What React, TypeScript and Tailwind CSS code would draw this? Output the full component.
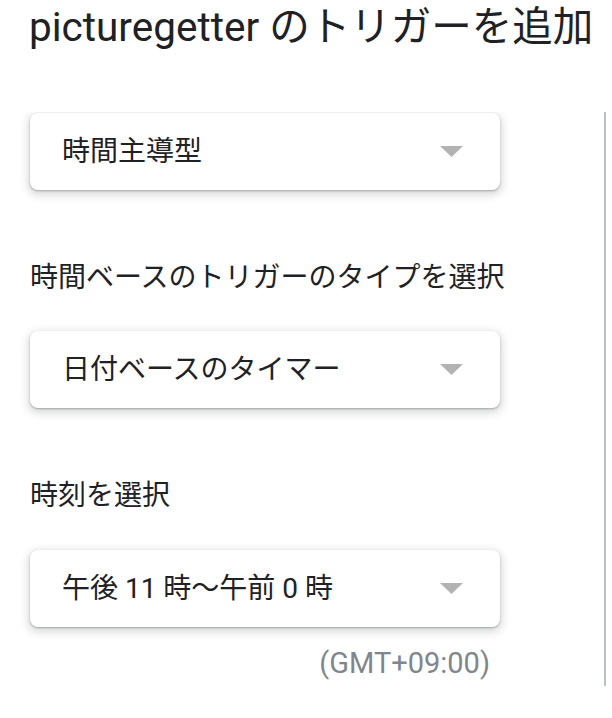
import { ReactNode } from 'react'

const font = { fontFamily: 'Roboto, "Noto Sans CJK JP", sans-serif' }

function Caret() {
  return (
    <svg width="23" height="11" viewBox="0 0 23 11" className="shrink-0">
      <path d="M0 0 L23 0 L11.5 11 Z" fill="#b3b3b3" />
    </svg>
  )
}

function Select({ children }: { children: ReactNode }) {
  return (
    <div className="w-[470px] h-[77px] flex items-center justify-between pl-[32px] pr-[37px] bg-white rounded-[8px] shadow-[0_1px_2px_rgba(60,64,67,0.35),0_3px_9px_2px_rgba(60,64,67,0.2)]">
      <span className="text-[28px] text-[#202124] leading-none">{children}</span>
      <Caret />
    </div>
  )
}

function Label({ children }: { children: ReactNode }) {
  return <div className="mt-[68px] h-[40px] leading-[40px] text-[28px] text-[#202124]">{children}</div>
}

export default function App() {
  return (
    <div className="w-[612px] h-[718px] bg-white overflow-hidden" style={font}>
      <h1 className="pl-[29px] h-[54px] leading-[54px] text-[40.5px] text-[#202124] font-normal whitespace-nowrap">
        picturegetter のトリガーを追加
      </h1>
      <div className="mt-[58px] h-[574px] flex overflow-hidden">
        <div className="flex-1 pl-[30px] pt-[1px]">
          <Select>時間主導型</Select>
          <Label>時間ベースのトリガーのタイプを選択</Label>
          <div className="mt-[33px]">
            <Select>日付ベースのタイマー</Select>
          </div>
          <Label>時刻を選択</Label>
          <div className="mt-[34px]">
            <Select>午後 11 時〜午前 0 時</Select>
          </div>
          <div className="mt-[18px] w-[470px] pr-[10px] text-right h-[36px] leading-[36px] text-[29px] text-[#80868b]">
            (GMT+09:00)
          </div>
        </div>
        <div className="w-[2px] bg-[#bdc1c6] mr-[6px]" />
      </div>
    </div>
  )
}
